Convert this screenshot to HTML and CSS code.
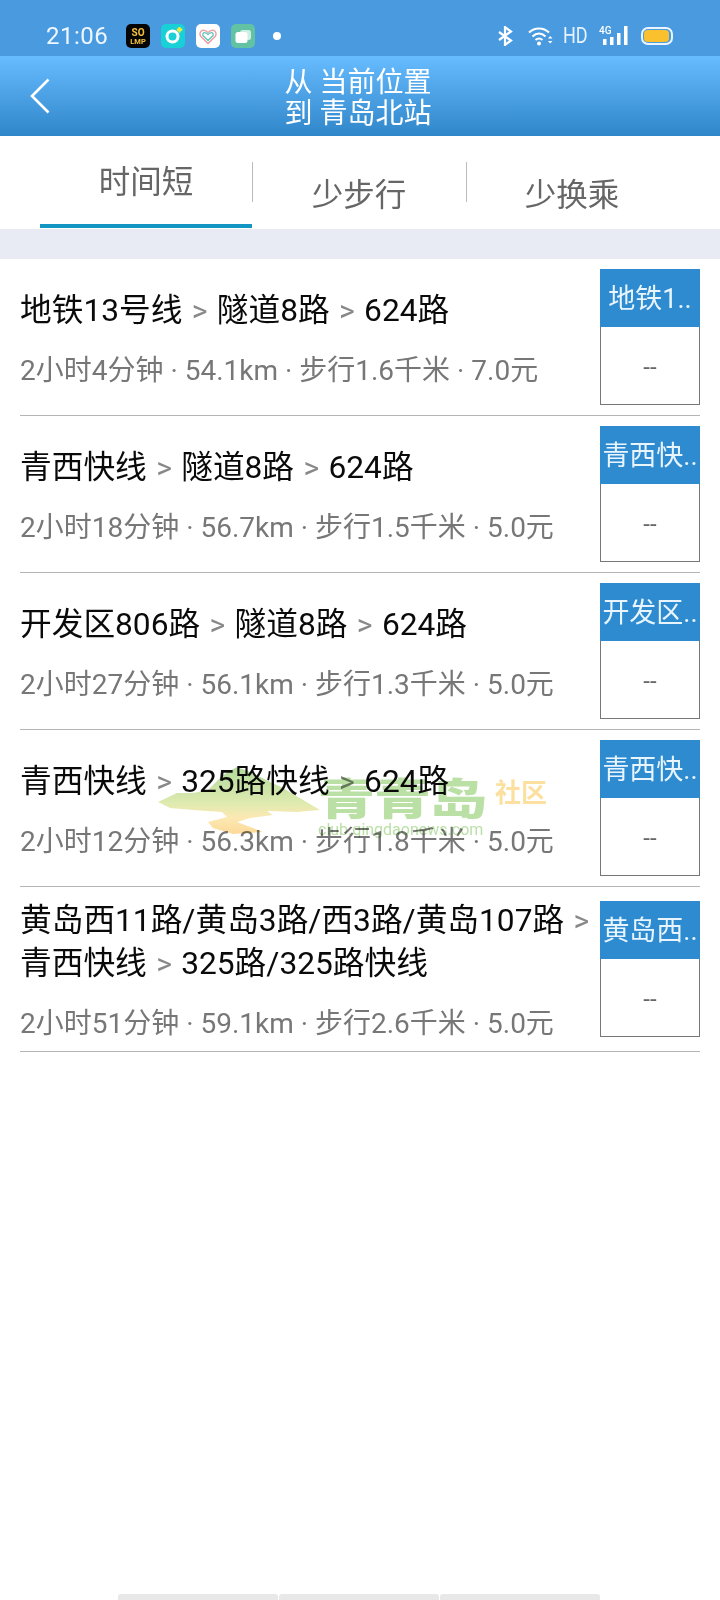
FILE: index.html
```html
<!DOCTYPE html>
<html lang="zh-CN">
<head>
<meta charset="utf-8">
<title>换乘方案</title>
<link rel="stylesheet" href="styles.css">
</head>
<body>
<div class="phone">
  <div class="status">
    <span class="time">21:06</span>
    <div class="apps">
      <svg class="app" viewBox="0 0 24 24"><rect width="24" height="24" rx="5" fill="#050505"/><text x="12" y="12" class="so">SO</text><text x="12" y="20" class="lmp">LMP</text></svg>
      <svg class="app" viewBox="0 0 24 24"><rect width="24" height="24" rx="5" fill="#18d0d6"/><circle cx="11.500" cy="12.500" r="5.500" fill="none" stroke="#fff" stroke-width="3"/><path d="M18.500 3v5.500M15.800 5.700h5.500" stroke="#f4ec3c" stroke-width="2.200"/></svg>
      <svg class="app" viewBox="0 0 24 24"><rect width="24" height="24" rx="5" fill="#fff"/><path d="M12 19.500 4.500 12C2.500 8 6.500 5 9.500 6.800L12 8.500 14.500 6.800C17.500 5 21.500 8 19.500 12Z" fill="none" stroke="#ef9aa0" stroke-width="1.300"/><path d="M12 16.500 7 11.500C6 9.500 8 8 10 9L12 10.500 14 9C16 8 18 9.500 17 11.500Z" fill="none" stroke="#5cc6bd" stroke-width="1.300"/></svg>
      <svg class="app" viewBox="0 0 24 24"><rect width="24" height="24" rx="5" fill="#62c3a4"/><rect x="9" y="6" width="11" height="10" rx="2.500" fill="#cdeee2"/><rect x="4.500" y="8" width="12" height="11" rx="2.500" fill="#fff"/></svg>
      <span class="dot"></span>
    </div>
    <div class="sys">
      <svg class="bt" viewBox="0 0 16 20"><path d="M2 6 14 14.500 8 19V1L14 5.500 2 14" fill="none" stroke="#fff" stroke-width="2.200"/></svg>
      <svg class="wifi" viewBox="0 0 25 20"><path d="M1 6.500C6.500 1 15.500 1 21 6.500M4.500 10.500C8.500 6.500 13.500 6.500 17.500 10.500M7.500 14C9.500 12.300 12.500 12.300 14.500 14" fill="none" stroke="#fff" stroke-width="2"/><circle cx="11" cy="17.500" r="2" fill="#fff"/><path d="M20 12.500 22.200 10 24.500 12.500ZM20 15 22.200 17.500 24.500 15Z" fill="#fff"/></svg>
      <span class="hd">HD</span>
      <div class="net">
        <span class="four">4G</span>
        <svg class="bars" viewBox="0 0 29 20"><rect x="4" y="13" width="3.500" height="6" fill="#fff"/><rect x="11" y="11" width="3.500" height="8" fill="#fff"/><rect x="18" y="7" width="3.500" height="12" fill="#fff"/><rect x="25" y="0" width="3.500" height="19" fill="#fff"/></svg>
      </div>
      <svg class="batt" viewBox="0 0 32 20"><rect x="1" y="2" width="30" height="16" rx="6" fill="none" stroke="#eaf5ff" stroke-width="2"/><rect x="3" y="4" width="25" height="12" rx="4" fill="#fbc02d"/></svg>
    </div>
  </div>

  <header class="bar">
    <svg class="back" viewBox="0 0 20 36"><path d="M18.500 1.500 2 18 18.500 34.500" fill="none" stroke="#fff" stroke-width="2.600"/></svg>
    <div class="title"><div>从 当前位置</div><div>到 青岛北站</div></div>
  </header>

  <nav class="tabs">
    <div class="tab active">时间短</div>
    <div class="tab">少步行</div>
    <div class="tab last">少换乘</div>
  </nav>
  <div class="gap"></div>

  <main class="list">
    <section class="row">
      <div class="info">
        <div class="route">地铁13号线 <i>&gt;</i> 隧道8路 <i>&gt;</i> 624路</div>
        <div class="meta">2小时4分钟 · 54.1km · 步行1.6千米 · 7.0元</div>
      </div>
      <div class="box"><div class="head">地铁1..</div><div class="body">--</div></div>
    </section>
    <section class="row">
      <div class="info">
        <div class="route">青西快线 <i>&gt;</i> 隧道8路 <i>&gt;</i> 624路</div>
        <div class="meta">2小时18分钟 · 56.7km · 步行1.5千米 · 5.0元</div>
      </div>
      <div class="box"><div class="head">青西快..</div><div class="body">--</div></div>
    </section>
    <section class="row">
      <div class="info">
        <div class="route">开发区806路 <i>&gt;</i> 隧道8路 <i>&gt;</i> 624路</div>
        <div class="meta">2小时27分钟 · 56.1km · 步行1.3千米 · 5.0元</div>
      </div>
      <div class="box"><div class="head">开发区..</div><div class="body">--</div></div>
    </section>
    <section class="row">
      <div class="info">
        <div class="route">青西快线 <i>&gt;</i> 325路快线 <i>&gt;</i> 624路</div>
        <div class="meta">2小时12分钟 · 56.3km · 步行1.8千米 · 5.0元</div>
      </div>
      <div class="box"><div class="head">青西快..</div><div class="body">--</div></div>
    </section>
    <section class="row">
      <div class="info">
        <div class="route">黄岛西11路/黄岛3路/西3路/黄岛107路 <i>&gt;</i> 青西快线 <i>&gt;</i> 325路/325路快线</div>
        <div class="meta">2小时51分钟 · 59.1km · 步行2.6千米 · 5.0元</div>
      </div>
      <div class="box"><div class="head">黄岛西..</div><div class="body">--</div></div>
    </section>
  </main>

  <div class="mark">
    <svg class="blob" viewBox="0 0 165 72">
      <defs><linearGradient id="g" x1="0" y1="0" x2="0" y2="1"><stop offset="0" stop-color="#9ed083"/><stop offset=".55" stop-color="#d8e69c"/><stop offset=".75" stop-color="#fbe3a0"/><stop offset="1" stop-color="#fbd080"/></linearGradient></defs>
      <path d="M0 35 19 26 35 26 50 23 65 8 79 0 92 5 125 21 162 43 139 45 109 44 115 48 92 51 79 55 95 61 105 65 89 66 75 67 55 61 50 55 69 50 64 45 35 43 12 41Z" fill="url(#g)"/>
    </svg>
    <span class="mark-name">青青岛</span>
    <span class="mark-tag">社区</span>
    <span class="mark-url">club.qingdaonews.com</span>
  </div>

  <div class="dock"><span></span><span></span><span></span></div>
</div>
</body>
</html>
```
FILE: styles.css
```css
* { box-sizing: border-box; }
html, body { margin: 0; padding: 0; background: #fff; }
body { font-family: Roboto, "Noto Sans CJK SC", sans-serif; }
.phone { position: relative; width: 720px; height: 1600px; overflow: hidden; background: #fff; }

.status { height: 56px; background: #4a9ae0; display: flex; align-items: center; padding: 16px 47px 0 46px; color: #fff; }
.time { font-size: 24px; width: 80px; letter-spacing: .5px; color: #eef7ff; }
.apps { display: flex; align-items: center; gap: 11px; }
.app { width: 24px; height: 24px; display: block; }
.so, .lmp { fill: #f6c23c; text-anchor: middle; font-weight: 700; }
.so { font-size: 10px; }
.lmp { font-size: 7.500px; }
.dot { width: 8px; height: 8px; border-radius: 50%; background: #fff; margin-left: 7px; }
.sys { margin-left: auto; display: flex; align-items: center; }
.bt { width: 16px; height: 20px; margin-right: 15px; }
.wifi { width: 25px; height: 20px; margin-right: 10px; }
.hd { font-size: 22px; line-height: 20px; width: 25px; margin-right: 11px; color: #e6f3ff; transform: scaleX(.82); transform-origin: left; }
.net { position: relative; width: 29px; height: 20px; margin-right: 13px; }
.bars { display: block; width: 29px; height: 20px; }
.four { position: absolute; left: 0; top: 0; font-size: 10px; font-weight: 500; color: #fff; line-height: 10px; }
.batt { width: 32px; height: 20px; }

.bar { height: 80px; background: linear-gradient(#67bcff, #2f86c8); position: relative; display: flex; justify-content: center; align-items: center; padding: 4px 4px 0 0; }
.back { position: absolute; left: 30px; top: 22px; width: 20px; height: 36px; }
.title { color: #fff; font-size: 28px; line-height: 31px; text-align: center; white-space: pre; }

.tabs { height: 93px; display: flex; align-items: flex-start; padding: 0 40px; background: #fff; }
.tab { width: 212px; height: 92px; font-size: 31.500px; color: #666; text-align: center; padding-top: 37px; line-height: 46px; position: relative; }
.tab::after { content: ""; position: absolute; right: -1px; top: 26px; height: 40px; width: 1px; background: #bbb; }
.tab.active { padding-top: 24px; border-bottom: 4px solid #1496c4; }
.tab.last::after { display: none; }
.tab:nth-child(2) { width: 214px; }
.gap { height: 30px; background: #e9ebf4; }

.row { margin: 0 20px; display: flex; align-items: center; border-bottom: 1px solid #b5b5b5; padding: 9px 0; min-height: 157px; }
.info { flex: 1; min-width: 0; padding-top: 3px; }
.route { font-size: 31.700px; line-height: 43px; color: #0a0a0a; word-spacing: 1.500px; }
.route i { font-style: normal; color: #888; font-size: 30px; line-height: 1; }
.meta { font-size: 28px; line-height: 36px; color: #777; margin-top: 21px; }
.box { width: 100px; height: 136px; flex: none; border: 1px solid #777; background: #fff; }
.head { height: 58px; margin: -1px -1px 0; background: #2e8bcf; color: #e8f5ff; font-size: 27px; line-height: 60px; text-align: center; white-space: nowrap; }
.body { height: 77px; line-height: 80px; text-align: center; color: #666; font-size: 24px; }

.mark { position: absolute; left: 158px; top: 767px; width: 400px; height: 72px; opacity: .8; mix-blend-mode: multiply; pointer-events: none; }
.blob { position: absolute; left: 0; top: 0; width: 165px; height: 72px; }
.mark-name { position: absolute; left: 160px; top: 8px; font-size: 57px; line-height: 56px; font-weight: 900; letter-spacing: -1px; color: #a9d88f; font-family: "Noto Sans CJK SC", sans-serif; transform: scaleY(.75); transform-origin: top; }
.mark-tag { position: absolute; left: 337px; top: 8px; font-size: 26px; line-height: 32px; font-weight: 700; color: #fcd888; font-family: "Noto Sans CJK SC", sans-serif; }
.mark-url { position: absolute; left: 160px; top: 53px; font-size: 16px; line-height: 20px; color: #a9d88f; }

.dock { position: absolute; left: 118px; bottom: 0; display: flex; gap: 1px; }
.dock span { height: 6px; width: 160px; background: #e8e8e8; border-radius: 3px 3px 0 0; }
```
